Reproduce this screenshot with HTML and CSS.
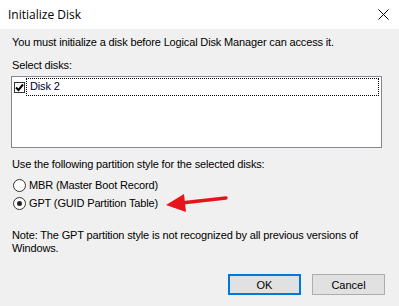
FILE: index.html
```html
<!DOCTYPE html>
<html lang="en">
<head>
    <meta charset="UTF-8">
    <title>Initialize Disk</title>
    <link rel="stylesheet" href="styles.css">
</head>
<body>
<div class="dialog">
    <div class="titlebar">
        <span class="title">Initialize Disk</span>
        <svg class="close" width="11" height="11" viewBox="0 0 11 11">
            <path d="M0.5 0.5 L10.5 10.5 M10.5 0.5 L0.5 10.5" stroke="#000" stroke-width="1" fill="none"/>
        </svg>
    </div>
    <div class="content">
        <p class="intro">You must initialize a disk before Logical Disk Manager can access it.</p>
        <p class="label">Select disks:</p>
        <div class="listbox">
            <div class="item">
                <span class="check">
                    <svg width="9" height="9" viewBox="0 0 9 9">
                        <path d="M1 4.5 L3.5 7 L8 1.5" stroke="#000" stroke-width="2" fill="none"/>
                    </svg>
                </span>
                <span class="item-text">Disk 2</span>
            </div>
        </div>
        <p class="label-style">Use the following partition style for the selected disks:</p>
        <div class="options">
            <div class="option"><span class="radio"></span>MBR (Master Boot Record)</div>
            <div class="option"><span class="radio checked"></span>GPT (GUID Partition Table)</div>
        </div>
        <p class="note">Note: The GPT partition style is not recognized by all previous versions of Windows.</p>
        <div class="buttons">
            <button class="btn btn-default">OK</button>
            <button class="btn">Cancel</button>
        </div>
    </div>
    <svg class="arrow" width="70" height="24" viewBox="0 0 70 24">
        <path d="M62 7 L17 12" stroke="#e8141b" stroke-width="3.5" stroke-linecap="round" fill="none"/>
        <path d="M2 14 L20 3 L22 21 Z" fill="#e8141b"/>
    </svg>
</div>
</body>
</html>
```

FILE: styles.css
```css
body {
    margin: 0;
    padding: 0;
    background-color: #f0f0f0;
    font-family: 'Liberation Sans', Arial, sans-serif;
    font-size: 11px;
    letter-spacing: -0.15px;
    color: #000;
}
p {
    margin: 0;
}
.dialog {
    position: relative;
    width: 399px;
    height: 306px;
    background-color: #f0f0f0;
}
.titlebar {
    height: 29px;
    background-color: #fff;
    display: flex;
    justify-content: space-between;
    align-items: center;
    padding: 0 10px 0 8px;
}
.title {
    font-family: 'Open Sans', 'Noto Sans', sans-serif;
    font-size: 12px;
    letter-spacing: 0;
    color: #000;
}
.content {
    padding: 7px 14px 0 12px;
    line-height: 13px;
}
.label {
    margin-top: 10px;
}
.listbox {
    margin: 4px 3px 0 -1px;
    height: 70px;
    background-color: #fff;
    border: 1px solid #828790;
}
.item {
    display: flex;
    align-items: center;
    padding: 1px 2px 0 2px;
}
.check {
    width: 9px;
    height: 9px;
    border: 1px solid #333;
    background-color: #fff;
    display: flex;
    margin-right: 1px;
}
.item-text {
    flex: 1;
    border: 1px dotted #000;
    padding: 1px 3px 2px 3px;
    color: #000033;
}
.label-style {
    margin-top: 10px;
}
.options {
    margin-top: 5px;
}
.option {
    display: flex;
    align-items: center;
    height: 18px;
}
.radio {
    width: 11px;
    height: 11px;
    border: 1px solid #333;
    border-radius: 50%;
    background-color: #fff;
    margin: 0 3px 0 1px;
    position: relative;
}
.radio.checked::after {
    content: "";
    position: absolute;
    left: 3px;
    top: 3px;
    width: 5px;
    height: 5px;
    border-radius: 50%;
    background-color: #222;
}
.note {
    margin-top: 17px;
}
.buttons {
    display: flex;
    justify-content: flex-end;
    gap: 11px;
    margin-top: 19px;
}
.btn {
    width: 73px;
    height: 21px;
    background-color: #e1e1e1;
    border: 1px solid #adadad;
    font-family: 'Liberation Sans', Arial, sans-serif;
    font-size: 11px;
    color: #000;
    padding: 0;
}
.btn-default {
    border: 2px solid #0078d7;
}
.arrow {
    position: absolute;
    left: 164px;
    top: 191px;
}
```
